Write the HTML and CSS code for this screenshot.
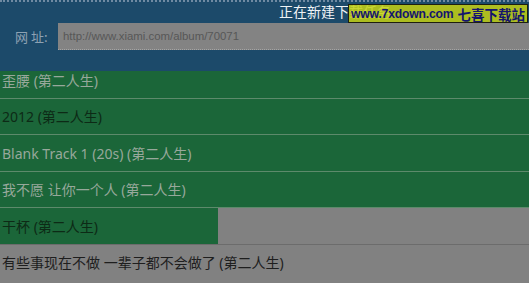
FILE: index.html
```html
<!DOCTYPE html>
<html lang="zh">
<head>
<meta charset="utf-8">
<title>正在新建下载任务</title>
<link rel="stylesheet" href="styles.css">
</head>
<body>
<div class="app">
  <header class="header">
    <div class="titlebar"><span class="title">正在新建下载任务</span></div>
    <div class="urlrow">
      <label class="label">网 址:</label>
      <div class="input">http://www.xiami.com/album/70071</div>
    </div>
    <div class="watermark"><span class="wm-url">www.7xdown.com</span> <span class="wm-cn">七喜下载站</span></div>
  </header>
  <div class="list">
    <div class="rows">
      <div class="row light">歪腰 (第二人生)</div>
      <div class="row dark">2012 (第二人生)</div>
      <div class="row light">Blank Track 1 (20s) (第二人生)</div>
      <div class="row light">我不愿 让你一个人 (第二人生)</div>
      <div class="row partial"><div class="cell">干杯 (第二人生)</div></div>
      <div class="row grey">有些事现在不做 一辈子都不会做了 (第二人生)</div>
    </div>
  </div>
</div>
</body>
</html>
```

FILE: styles.css
```css
html, body {
  margin: 0;
  padding: 0;
}
body {
  width: 529px;
  height: 283px;
  overflow: hidden;
  background: #818181;
  font-family: "Noto Sans", "Noto Sans CJK SC", sans-serif;
}
.app {
  display: flex;
  flex-direction: column;
  height: 283px;
}
.header {
  position: relative;
  z-index: 2;
  height: 69px;
  flex: none;
  background: #1c4a6a;
  border-top: 2px dotted #6f8aa2;
}
.titlebar {
  height: 18px;
  padding-left: 279px;
  display: flex;
  align-items: center;
}
.title {
  font-family: "Noto Sans CJK SC", sans-serif;
  font-size: 14px;
  line-height: 18px;
  color: #eef2f5;
  white-space: nowrap;
}
.urlrow {
  display: flex;
  align-items: center;
  margin-top: 3px;
  height: 27px;
}
.label {
  width: 43px;
  padding-left: 15px;
  box-sizing: content-box;
  font-family: "Noto Sans CJK SC", sans-serif;
  font-size: 13px;
  color: #8ea2b3;
  white-space: pre;
}
.input {
  flex: 1;
  height: 27px;
  box-sizing: border-box;
  background: #838383;
  border-bottom: 1px dotted #a5a5a5;
  padding-left: 5px;
  display: flex;
  align-items: center;
  font-family: "Liberation Sans", sans-serif;
  font-size: 11.4px;
  color: #575757;
}
.watermark {
  position: absolute;
  left: 348px;
  top: 2px;
  width: 178px;
  height: 17px;
  border: 1px solid #1e1e10;
  background: rgba(196, 208, 20, 0.86);
  display: flex;
  align-items: center;
  justify-content: center;
  gap: 4px;
  color: #14146e;
  white-space: nowrap;
}
.wm-url {
  font-family: "Liberation Sans", sans-serif;
  font-weight: bold;
  font-size: 12.2px;
  letter-spacing: -0.2px;
}
.wm-cn {
  font-family: "Noto Sans CJK SC", sans-serif;
  font-weight: bold;
  font-size: 13.5px;
  line-height: 16px;
}
.list {
  flex: 1;
  overflow: hidden;
}
.rows {
  margin-top: -9px;
}
.row {
  height: 35.5px;
  border-bottom: 1px solid #5d8a6b;
  background: #1b6639;
  display: flex;
  align-items: center;
  padding-left: 2px;
  box-sizing: content-box;
  font-size: 14px;
  white-space: nowrap;
}
.row.light {
  color: #97a89b;
}
.row.dark {
  color: #0d2a16;
}
.row.partial {
  background: #818181;
  padding-left: 0;
  align-items: stretch;
  border-bottom-color: #6c6c6c;
}
.cell {
  width: 216px;
  padding-left: 2px;
  background: #1b6639;
  display: flex;
  align-items: center;
  color: #0d2a16;
}
.row.grey {
  background: #818181;
  border-bottom: none;
  color: #1e1e1e;
}
```
